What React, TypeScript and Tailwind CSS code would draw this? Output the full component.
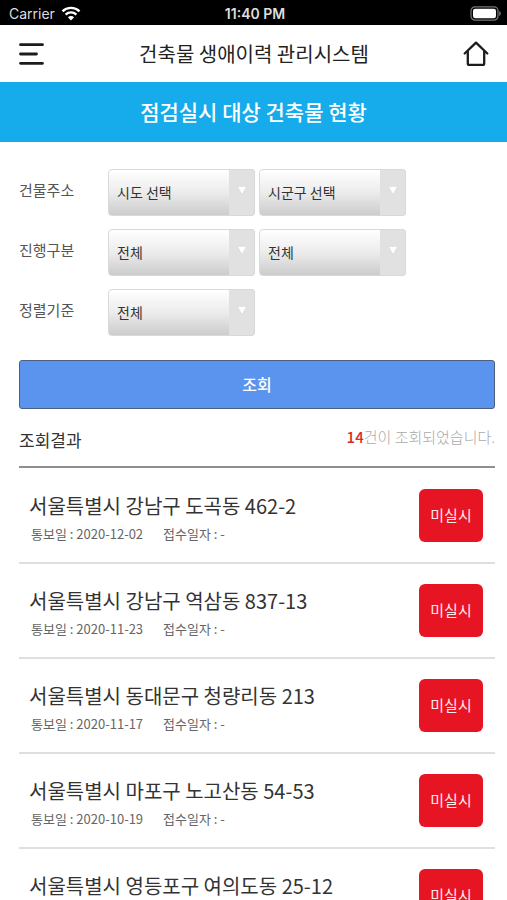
import React from 'react';

interface ISelectProps {
  id: string;
  label: string;
  options: string[];
}

interface IFilterRow {
  title: string;
  selects: ISelectProps[];
}

interface IBuilding {
  address: string;
  noticeDate: string;
  receiptDate: string;
  status: string;
}

const filterRows: IFilterRow[] = [
  {
    title: '건물주소',
    selects: [
      { id: 'sido', label: '시도', options: ['시도 선택'] },
      { id: 'sigungu', label: '시군구', options: ['시군구 선택'] },
    ],
  },
  {
    title: '진행구분',
    selects: [
      { id: 'progress', label: '진행구분', options: ['전체'] },
      { id: 'progress-detail', label: '진행구분 상세', options: ['전체'] },
    ],
  },
  {
    title: '정렬기준',
    selects: [{ id: 'sort', label: '정렬기준', options: ['전체'] }],
  },
];

const buildings: IBuilding[] = [
  { address: '서울특별시 강남구 도곡동 462-2', noticeDate: '2020-12-02', receiptDate: '-', status: '미실시' },
  { address: '서울특별시 강남구 역삼동 837-13', noticeDate: '2020-11-23', receiptDate: '-', status: '미실시' },
  { address: '서울특별시 동대문구 청량리동 213', noticeDate: '2020-11-17', receiptDate: '-', status: '미실시' },
  { address: '서울특별시 마포구 노고산동 54-53', noticeDate: '2020-10-19', receiptDate: '-', status: '미실시' },
  { address: '서울특별시 영등포구 여의도동 25-12', noticeDate: '', receiptDate: '', status: '미실시' },
];

const StatusBar = () => (
  <div className="grid h-[25px] shrink-0 grid-cols-3 items-center bg-black pt-0.5 pr-1.5 pl-[9px] font-['Inter','Liberation_Sans',sans-serif] text-sm text-[#dedede]">
    <div className="flex items-center gap-1.5">
      <span>Carrier</span>
      <svg width="20" height="15" viewBox="0 0 20 15" aria-hidden="true">
        <path d="M1.5 5.3a12.3 12.3 0 0 1 17 0" fill="none" stroke="#fff" strokeWidth="2.4" />
        <path d="M4.6 8.6a7.8 7.8 0 0 1 10.8 0" fill="none" stroke="#fff" strokeWidth="2.3" />
        <path d="M10 14.4 6.9 11.2a4.4 4.4 0 0 1 6.2 0z" fill="#fff" />
      </svg>
    </div>
    <span className="text-center font-semibold">11:40 PM</span>
    <svg className="justify-self-end" width="31" height="15" viewBox="0 0 31 15" aria-hidden="true">
      <rect x="1" y="0.8" width="27" height="13.4" rx="4" fill="none" stroke="#777" strokeWidth="1.2" />
      <rect x="3" y="2.8" width="23" height="9.4" rx="2.2" fill="#fff" />
      <path d="M29.2 5v5c1-.4 1.6-1.3 1.6-2.5S30.2 5.4 29.2 5z" fill="#777" />
    </svg>
  </div>
);

const Header = () => (
  <header className="flex h-[57px] shrink-0 items-center justify-between bg-white px-[18px]">
    <button type="button" aria-label="메뉴">
      <svg width="27" height="24" viewBox="0 0 27 24" fill="none" stroke="#1c1c1c" strokeWidth="2.8" strokeLinecap="round">
        <path d="M2.5 2.7H24.500M2.5 12H18.500M2.5 21.3H24.500" />
      </svg>
    </button>
    <h1 className="text-xl text-[#222]">건축물 생애이력 관리시스템</h1>
    <a href="#home" aria-label="홈">
      <svg width="26" height="26" viewBox="0 0 26 26" fill="none" stroke="#1c1c1c" strokeWidth="2.3" strokeLinecap="round" strokeLinejoin="round">
        <path d="M1.7 12.5 13 1.7 24.3 12.5" />
        <path d="M4.8 10.500V22.500a1.400 1.400 0 0 0 1.400 1.400H19.800a1.400 1.400 0 0 0 1.400-1.400V10.500" />
      </svg>
    </a>
  </header>
);

const Select = ({ id, label, options }: ISelectProps) => (
  <div className="relative">
    <select
      id={id}
      aria-label={label}
      className="h-[47px] w-[147px] appearance-none rounded border border-[#d9d9d9] bg-linear-to-b from-white via-[#ececec] to-[#cccccc] pr-7 pb-0.5 pl-2 text-sm text-[#333]"
    >
      {options.map((option) => (
        <option key={option}>{option}</option>
      ))}
    </select>
    <div className="pointer-events-none absolute inset-y-0 right-0 flex w-[26px] items-center justify-center rounded-r border border-l-0 border-[#d9d9d9] bg-[#e1e1e1] pb-1">
      <svg width="10" height="9" viewBox="0 0 10 9" aria-hidden="true">
        <path d="M.5.5H9.500L5 8.500z" fill="#fff" stroke="#d0d0d0" strokeWidth="0.400" />
      </svg>
    </div>
  </div>
);

const BuildingItem = ({ address, noticeDate, receiptDate, status }: IBuilding) => (
  <li className="flex h-[95px] items-center justify-between border-b-2 border-[#dfdfdf] pr-3 pl-2.5">
    <div className="pt-2">
      <h3 className="text-xl leading-7 text-[#333]">{address}</h3>
      <p className="flex h-7 gap-5 pl-0.5 text-[13px] leading-7 text-[#666]">
        {noticeDate && <span>통보일 : {noticeDate}</span>}
        {receiptDate && <span>접수일자 : {receiptDate}</span>}
      </p>
    </div>
    <button type="button" className="h-[53px] w-16 rounded-md bg-[#e71423] text-[15px] text-[#ffe9ea]">
      {status}
    </button>
  </li>
);

const App = () => {
  return (
    <div className="flex h-screen flex-col overflow-hidden bg-white font-['Noto_Sans_CJK_KR',sans-serif]">
      <StatusBar />
      <Header />
      <h2 className="flex h-[60px] shrink-0 items-center justify-center bg-[#16abeb] text-[21px] font-medium text-white">
        점검실시 대상 건축물 현황
      </h2>
      <main className="flex-1 overflow-y-auto pr-3 pl-[19px] [scrollbar-width:none]">
        <form className="pt-[27px]" onSubmit={(e) => e.preventDefault()}>
          <div className="flex flex-col gap-[13px]">
            {filterRows.map((row) => (
              <div key={row.title} className="flex items-center">
                <label htmlFor={row.selects[0].id} className="w-[89px] pb-1 text-[15px] text-[#555]">
                  {row.title}
                </label>
                <div className="flex gap-1">
                  {row.selects.map((select) => (
                    <Select key={select.id} {...select} />
                  ))}
                </div>
              </div>
            ))}
          </div>
          <button
            type="submit"
            className="mt-6 h-[49px] w-full rounded-[3px] border border-[#4a5f82] bg-[#5b94ee] pb-0.5 text-base font-medium text-white"
          >
            조회
          </button>
        </form>
        <section>
          <div className="flex h-[59px] items-center justify-between border-b-2 border-[#8f8f8f]">
            <h2 className="pt-1 text-[17px] text-[#333]">조회결과</h2>
            <p className="text-[15px] font-light text-[#aaa]">
              <strong className="font-medium text-[#e0281f]">14</strong>건이 조회되었습니다.
            </p>
          </div>
          <ul className="pt-px">
            {buildings.map((building) => (
              <BuildingItem key={building.address} {...building} />
            ))}
          </ul>
        </section>
      </main>
    </div>
  );
};

export default App;
